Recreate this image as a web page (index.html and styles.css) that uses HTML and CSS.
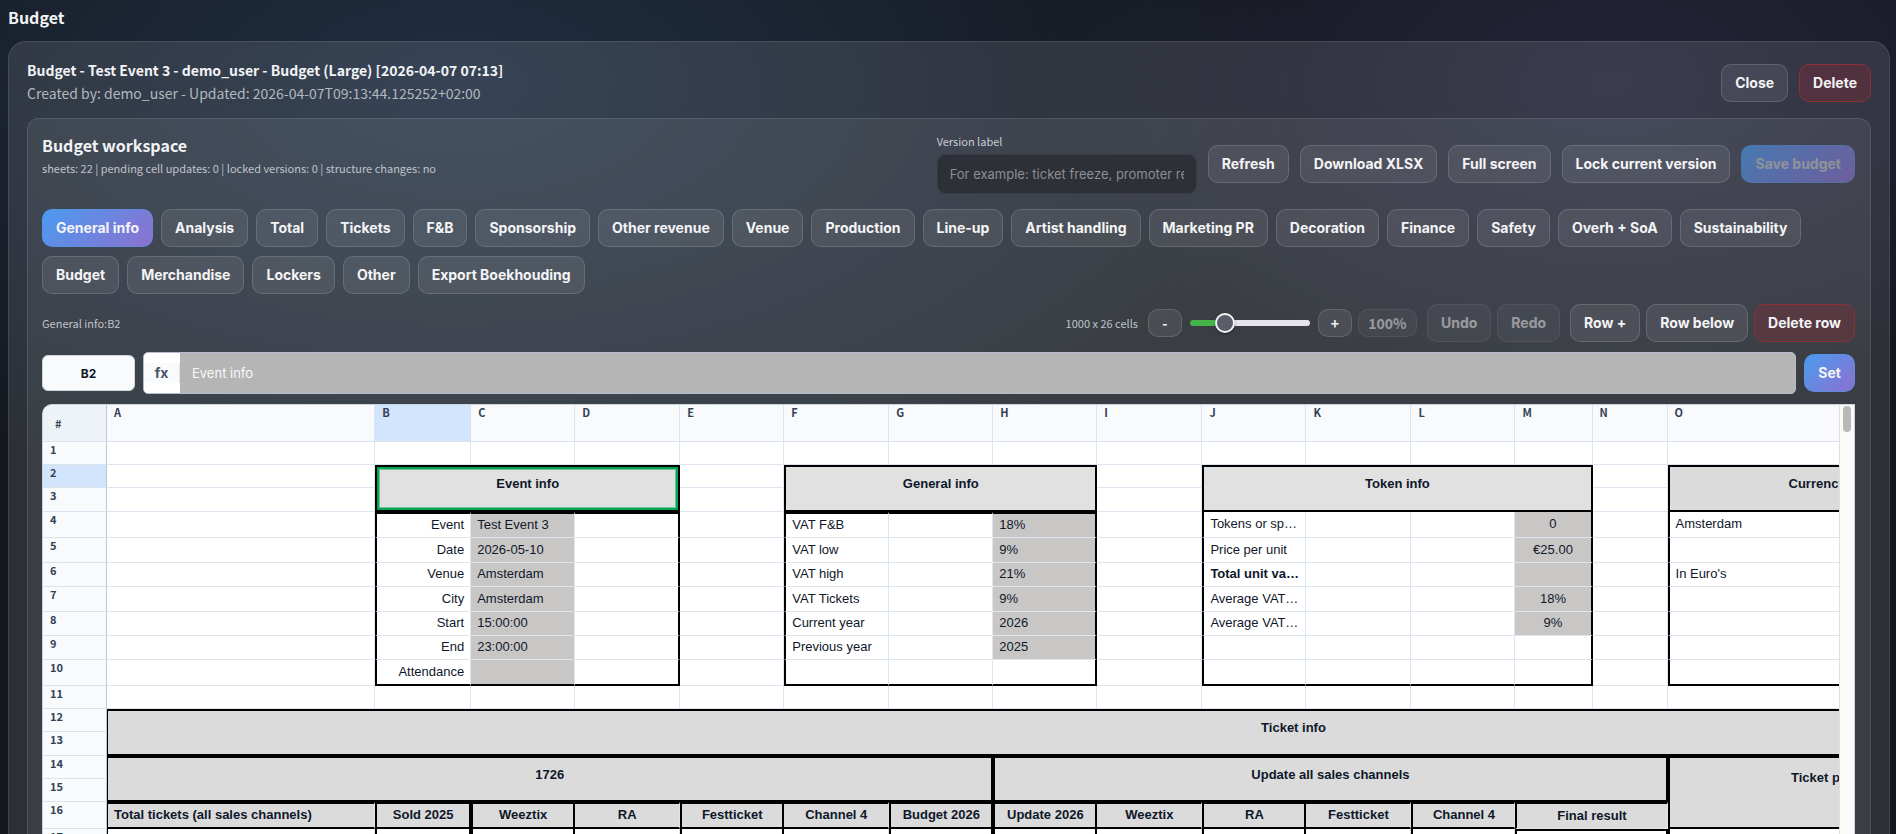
FILE: index.html
```html
<!DOCTYPE html>
<html lang="en">
<head>
<meta charset="utf-8">
<meta name="viewport" content="width=device-width, initial-scale=1">
<title>Budget</title>
<link rel="stylesheet" href="styles.css">
</head>
<body>
<h1 class="page-title">Budget</h1>
<main class="card">
  <header class="card-head">
    <div>
      <h2 class="card-title">Budget - Test Event 3 - demo_user - Budget (Large) [2026-04-07 07:13]</h2>
      <p class="card-sub">Created by: demo_user - Updated: 2026-04-07T09:13:44.125252+02:00</p>
    </div>
    <div class="actions">
      <button class="btn" type="button">Close</button>
      <button class="btn danger" type="button">Delete</button>
    </div>
  </header>

  <section class="workspace">
    <div class="ws-head">
      <div class="ws-intro">
        <h3 class="ws-title">Budget workspace</h3>
        <p class="small">sheets: 22 | pending cell updates: 0 | locked versions: 0 | structure changes: no</p>
      </div>
      <div class="actions">
        <div class="field">
          <label class="field-label" for="version">Version label</label>
          <input class="field-input" id="version" type="text" placeholder="For example: ticket freeze, promoter review">
        </div>
        <button class="btn" type="button">Refresh</button>
        <button class="btn" type="button">Download XLSX</button>
        <button class="btn" type="button">Full screen</button>
        <button class="btn" type="button">Lock current version</button>
        <button class="btn primary" type="button" disabled>Save budget</button>
      </div>
    </div>

    <nav class="tabs" aria-label="Sheets">
      <button class="btn primary" type="button">General info</button>
      <button class="btn" type="button">Analysis</button>
      <button class="btn" type="button">Total</button>
      <button class="btn" type="button">Tickets</button>
      <button class="btn" type="button">F&amp;B</button>
      <button class="btn" type="button">Sponsorship</button>
      <button class="btn" type="button">Other revenue</button>
      <button class="btn" type="button">Venue</button>
      <button class="btn" type="button">Production</button>
      <button class="btn" type="button">Line-up</button>
      <button class="btn" type="button">Artist handling</button>
      <button class="btn" type="button">Marketing PR</button>
      <button class="btn" type="button">Decoration</button>
      <button class="btn" type="button">Finance</button>
      <button class="btn" type="button">Safety</button>
      <button class="btn" type="button">Overh + SoA</button>
      <button class="btn" type="button">Sustainability</button>
      <button class="btn" type="button">Budget</button>
      <button class="btn" type="button">Merchandise</button>
      <button class="btn" type="button">Lockers</button>
      <button class="btn" type="button">Other</button>
      <button class="btn" type="button">Export Boekhouding</button>
    </nav>

    <div class="toolbar">
      <span class="small">General info:B2</span>
      <div class="tools">
        <span class="small">1000 x 26 cells</span>
        <div class="zoom">
          <button class="btn mini" type="button" aria-label="Zoom out">-</button>
          <input class="slider" type="range" min="50" max="250" value="100" aria-label="Zoom">
          <button class="btn mini" type="button" aria-label="Zoom in">+</button>
        </div>
        <button class="btn mini level" type="button" disabled>100%</button>
        <div class="group">
          <button class="btn" type="button" disabled>Undo</button>
          <button class="btn" type="button" disabled>Redo</button>
        </div>
        <div class="group">
          <button class="btn" type="button">Row +</button>
          <button class="btn" type="button">Row below</button>
          <button class="btn danger" type="button">Delete row</button>
        </div>
      </div>
    </div>

    <div class="formula">
      <input class="cell-name" type="text" value="B2" aria-label="Cell">
      <div class="formula-box">
        <label class="fx" for="formula"><span class="fx-mark">fx</span></label>
        <input class="formula-input" id="formula" type="text" value="Event info">
      </div>
      <button class="btn primary" type="button">Set</button>
    </div>

    <div class="grid">
      <div class="sheet-view">
        <table class="sheet">
          <colgroup>
            <col class="w-head"><col class="w-a"><col class="w-b"><col class="w-m1"><col class="w-m2"><col class="w-m1"><col class="w-m2"><col class="w-m1"><col class="w-m1"><col class="w-m2"><col class="w-m1"><col class="w-m2"><col class="w-m1"><col class="w-s1"><col class="w-s2"><col class="w-o"><col class="w-p"><col class="w-q">
          </colgroup>
          <thead>
            <tr class="letters"><th class="corner">#</th><th>A</th><th class="active">B</th><th>C</th><th>D</th><th>E</th><th>F</th><th>G</th><th>H</th><th>I</th><th>J</th><th>K</th><th>L</th><th>M</th><th>N</th><th>O</th><th></th><th></th></tr>
          </thead>
          <tbody>
            <tr class="h23"><th>1</th><td></td><td></td><td></td><td></td><td></td><td></td><td></td><td></td><td></td><td></td><td></td><td></td><td></td><td></td><td></td><td></td><td></td></tr>
            <tr class="h23"><th class="active">2</th><td></td><td class="block t l r b selected" colspan="3" rowspan="2">Event info</td><td></td><td class="block t l r b" colspan="3" rowspan="2">General info</td><td></td><td class="block t l r b" colspan="4" rowspan="2">Token info</td><td></td><td class="block dim t l b" rowspan="2">Currency</td><td></td><td></td></tr>
            <tr class="h24"><th>3</th><td></td><td></td><td></td><td></td><td></td><td></td></tr>
            <tr class="h26"><th>4</th><td></td><td class="l t right">Event</td><td class="t fill">Test Event 3</td><td class="t r"></td><td></td><td class="l t">VAT F&amp;B</td><td class="t"></td><td class="t r fill">18%</td><td></td><td class="l">Tokens or spendings</td><td></td><td></td><td class="r fill center">0</td><td></td><td class="l">Amsterdam</td><td></td><td></td></tr>
            <tr class="h25"><th>5</th><td></td><td class="l right">Date</td><td class="fill">2026-05-10</td><td class="r"></td><td></td><td class="l">VAT low</td><td></td><td class="r fill">9%</td><td></td><td class="l">Price per unit</td><td></td><td></td><td class="r fill center">€25.00</td><td></td><td class="l"></td><td></td><td></td></tr>
            <tr class="h24"><th>6</th><td></td><td class="l right">Venue</td><td class="fill">Amsterdam</td><td class="r"></td><td></td><td class="l">VAT high</td><td></td><td class="r fill">21%</td><td></td><td class="l bold">Total unit value</td><td></td><td></td><td class="r fill"></td><td></td><td class="l">In Euro's</td><td></td><td></td></tr>
            <tr class="h25"><th>7</th><td></td><td class="l right">City</td><td class="fill">Amsterdam</td><td class="r"></td><td></td><td class="l">VAT Tickets</td><td></td><td class="r fill">9%</td><td></td><td class="l">Average VAT F&amp;B</td><td></td><td></td><td class="r fill center">18%</td><td></td><td class="l"></td><td></td><td></td></tr>
            <tr class="h24"><th>8</th><td></td><td class="l right">Start</td><td class="fill">15:00:00</td><td class="r"></td><td></td><td class="l">Current year</td><td></td><td class="r fill">2026</td><td></td><td class="l">Average VAT Tickets</td><td></td><td></td><td class="r fill center">9%</td><td></td><td class="l"></td><td></td><td></td></tr>
            <tr class="h24"><th>9</th><td></td><td class="l right">End</td><td class="fill">23:00:00</td><td class="r"></td><td></td><td class="l">Previous year</td><td></td><td class="r fill">2025</td><td></td><td class="l"></td><td></td><td></td><td class="r"></td><td></td><td class="l"></td><td></td><td></td></tr>
            <tr class="h26"><th>10</th><td></td><td class="l b right">Attendance</td><td class="b fill"></td><td class="r b"></td><td></td><td class="l b"></td><td class="b"></td><td class="r b"></td><td></td><td class="l b"></td><td class="b"></td><td class="b"></td><td class="r b"></td><td></td><td class="l b"></td><td></td><td></td></tr>
            <tr class="h23"><th>11</th><td></td><td></td><td></td><td></td><td></td><td></td><td></td><td></td><td></td><td></td><td></td><td></td><td></td><td></td><td></td><td></td><td></td></tr>
            <tr class="h23"><th>12</th><td class="block dim t l1 b" colspan="17" rowspan="2">Ticket info</td></tr>
            <tr class="h24"><th>13</th></tr>
            <tr class="h23"><th>14</th><td class="block dim t l1 r b" colspan="7" rowspan="2">1726</td><td class="block dim t l r b" colspan="7" rowspan="2">Update all sales channels</td><td class="block dim tall t l b" colspan="2" rowspan="3">Ticket price</td><td></td></tr>
            <tr class="h23"><th>15</th><td></td></tr>
            <tr class="h27"><th>16</th><td class="head t l1 b first">Total tickets (all sales channels)</td><td class="head t l r b">Sold 2025</td><td class="head t l r b">Weeztix</td><td class="head t b">RA</td><td class="head t l r b">Festticket</td><td class="head t b">Channel 4</td><td class="head t l r b">Budget 2026</td><td class="head t l r b">Update 2026</td><td class="head t b">Weeztix</td><td class="head t l r b">RA</td><td class="head t b">Festticket</td><td class="head t l b">Channel 4</td><td class="head t l" colspan="2">Final result</td><td></td></tr>
            <tr class="h26"><th>17</th><td class="l1"></td><td class="l r"></td><td class="l r"></td><td></td><td class="l r"></td><td></td><td class="l r"></td><td class="l r"></td><td></td><td class="l r"></td><td></td><td class="l"></td><td class="l r t" colspan="2"></td><td class="l"></td><td></td><td></td></tr>
          </tbody>
        </table>
      </div>
      <div class="scrollbar"><div class="thumb"></div></div>
    </div>
  </section>
</main>
</body>
</html>
```

FILE: styles.css
```css
* { box-sizing: border-box; }

html, body { height: 100%; }

body {
  margin: 0;
  padding: 5px 6px 0 8px;
  overflow: hidden;
  color: #f2f3f5;
  font-family: "Noto Sans CJK SC", "Noto Sans", sans-serif;
  background:
    radial-gradient(ellipse 860px 440px at 24% 10%, rgba(70, 120, 180, 0.24), transparent),
    radial-gradient(ellipse 580px 320px at 85% 10%, rgba(105, 102, 185, 0.18), transparent),
    #14171d;
}

h1, h2, h3, p { margin: 0; }

.page-title { margin-bottom: 12px; font-size: 16px; line-height: 24px; font-weight: 700; }

.card {
  min-height: 100%;
  padding: 18px;
  border: 1px solid rgba(255, 255, 255, 0.1);
  border-radius: 18px;
  background: rgba(248, 250, 255, 0.11);
}

.card-head, .ws-head, .toolbar {
  display: flex;
  justify-content: space-between;
  align-items: center;
}

.card-head { margin-bottom: 12px; }
.card-title { font-size: 14px; line-height: 21px; font-weight: 700; }
.card-sub { font-size: 14px; line-height: 25px; color: #b2b7be; }

.actions { display: flex; align-items: center; gap: 11px; }

.workspace {
  display: flex;
  flex-direction: column;
  gap: 10px;
  padding: 15px 15px 14px 14px;
  border: 1px solid rgba(255, 255, 255, 0.1);
  border-radius: 12px;
  background: rgba(248, 250, 255, 0.075);
}

.ws-head { padding-bottom: 5px; }
.ws-intro { align-self: flex-start; }
.ws-title { font-size: 16px; line-height: 22px; font-weight: 700; }
.small { font-size: 11px; line-height: 24px; color: #c0c3c8; }

.field { display: flex; flex-direction: column; gap: 6px; width: 260px; }
.field-label { font-size: 11px; line-height: 14px; color: #c8cbd0; }
.field-input {
  width: 100%;
  height: 40px;
  padding: 0 12px;
  border: 1px solid rgba(255, 255, 255, 0.05);
  border-radius: 9px;
  background: #2d3036;
  color: #f2f3f5;
  font: 13px/20px Inter, sans-serif;
}
.field-input::placeholder { color: #8c8f94; }

.btn {
  height: 38px;
  padding: 0 13px;
  border: 1px solid rgba(255, 255, 255, 0.14);
  border-radius: 10px;
  background: rgba(255, 255, 255, 0.08);
  color: #f4f4f6;
  font: 700 14px/20px Inter, sans-serif;
  white-space: nowrap;
}
.btn:disabled { opacity: 0.5; }
.primary {
  border-color: rgba(80, 150, 230, 0.6);
  background: linear-gradient(135deg, #4a9bf0, #8d70cf);
  background-origin: border-box;
}
.primary:disabled { opacity: 0.6; color: #c4c6cc; }
.danger { border-color: #8c3038; background: rgba(150, 40, 50, 0.3); }

.tabs { display: flex; flex-wrap: wrap; gap: 9px 8px; }

.toolbar { min-height: 38px; }
.tools { display: flex; align-items: center; gap: 10px; }
.group { display: flex; gap: 6px; }
.zoom { display: flex; align-items: center; gap: 8px; }
.mini {
  width: 34px;
  height: 28px;
  padding: 0;
  font: 700 14px/20px "Noto Sans CJK SC", "Noto Sans", sans-serif;
}
.level { width: 59px; margin-left: -4px; }

.slider {
  width: 120px;
  height: 20px;
  margin: 0;
  appearance: none;
  background: transparent;
}
.slider::-webkit-slider-runnable-track {
  height: 6px;
  border-radius: 3px;
  background: linear-gradient(90deg, #46b549 29%, #e4e4ea 29%);
}
.slider::-webkit-slider-thumb {
  appearance: none;
  width: 20px;
  height: 20px;
  margin-top: -7px;
  border: 2px solid #f4f4f6;
  border-radius: 50%;
  background: #5c5c6a;
  box-shadow: 0 1px 2px rgba(0, 0, 0, 0.5);
}

.formula { display: flex; align-items: center; gap: 8px; }
.cell-name {
  width: 93px;
  height: 36px;
  padding: 0;
  border: 1px solid #cbd5e1;
  border-radius: 6px;
  background: #f8fafc;
  color: #0f172a;
  font: 700 12px/20px Inter, sans-serif;
  text-align: center;
}
.formula-box {
  display: flex;
  flex: 1;
  height: 42px;
  border: 1px solid #b4bdc9;
  border-radius: 5px;
  background: #b5b5b5;
  overflow: hidden;
}
.fx { display: flex; align-items: center; width: 36px; background: #fff; }
.fx-mark {
  width: 100%;
  border-right: 1px solid #dbe3ec;
  background: #f8fafc;
  color: #475569;
  font: 700 14px/20px Inter, sans-serif;
  text-align: center;
}
.formula-input {
  flex: 1;
  padding: 0 12px;
  border: 0;
  background: transparent;
  color: #f8f8f8;
  font: 13px/20px Inter, sans-serif;
}

.grid {
  display: flex;
  border: 1px solid #cbd5e1;
  border-width: 1px 1px 0 1px;
  border-radius: 10px 0 0 0;
  background: #fff;
  overflow: hidden;
}
.sheet-view { flex: 1; min-width: 0; overflow: hidden; }
.scrollbar {
  display: flex;
  flex-direction: column;
  align-items: center;
  width: 15px;
  padding-top: 1px;
  border-left: 1px solid #e0e0e0;
  background: #fafafa;
}
.thumb { width: 8px; height: 26px; border-radius: 4px; background: #b8b8b8; }

.sheet {
  width: 2437px;
  table-layout: fixed;
  border-collapse: separate;
  border-spacing: 0;
  color: #0f172a;
  font: 13px/15px "Liberation Sans", Arial, sans-serif;
}
.w-head { width: 64px; }
.w-a { width: 268px; }
.w-b { width: 96px; }
.w-m1 { width: 104px; }
.w-m2 { width: 105px; }
.w-s1 { width: 77px; }
.w-s2 { width: 75px; }
.w-o { width: 298px; }
.w-p { width: 20px; }
.w-q { width: 494px; }

.letters { height: 37px; }
.h23 { height: 23px; }
.h24 { height: 24px; }
.h25 { height: 25px; }
.h26 { height: 26px; }
.h27 { height: 27px; }

.sheet th {
  padding: 0 7px;
  border: solid #dbe4ee;
  border-width: 0 1px 1px 0;
  background: #f8fafc;
  color: #334155;
  font: 700 11px/15px "Noto Sans CJK SC", "Noto Sans", sans-serif;
  text-align: left;
  vertical-align: top;
}
.sheet tbody th { border-right-color: #b9c8da; }
.sheet .corner { padding: 0 12px; border-right-color: #b9c8da; background: #eef3f7; vertical-align: middle; }
.sheet .active { background: #d3e5fc; }

.sheet td {
  padding: 0 6px 2px;
  border: solid #dde5ee;
  border-width: 0 1px 1px 0;
  overflow: hidden;
  text-overflow: ellipsis;
  white-space: nowrap;
}
.sheet .t { border-top: 2px solid #000; }
.sheet .b { border-bottom: 2px solid #000; }
.sheet .l { border-left: 2px solid #000; }
.sheet .l1 { border-left: 1px solid #000; }
.sheet .r { border-right: 2px solid #000; }
.right { text-align: right; }
.center { text-align: center; }
.bold { font-weight: 700; }
.fill { background: #c9c7c6; }
.sheet .block { padding-bottom: 10px; background: #e1e1e1; font-weight: 700; text-align: center; }
.sheet .dim { background: #dbdbdb; }
.sheet .tall { padding-bottom: 31px; }
.sheet .selected { box-shadow: inset 0 0 0 2px #00a651, inset 0 0 0 3px rgba(0, 166, 81, 0.5); }
.head { background: #dbdbdb; font-weight: 700; text-align: center; }
.first { text-align: left; }
```
